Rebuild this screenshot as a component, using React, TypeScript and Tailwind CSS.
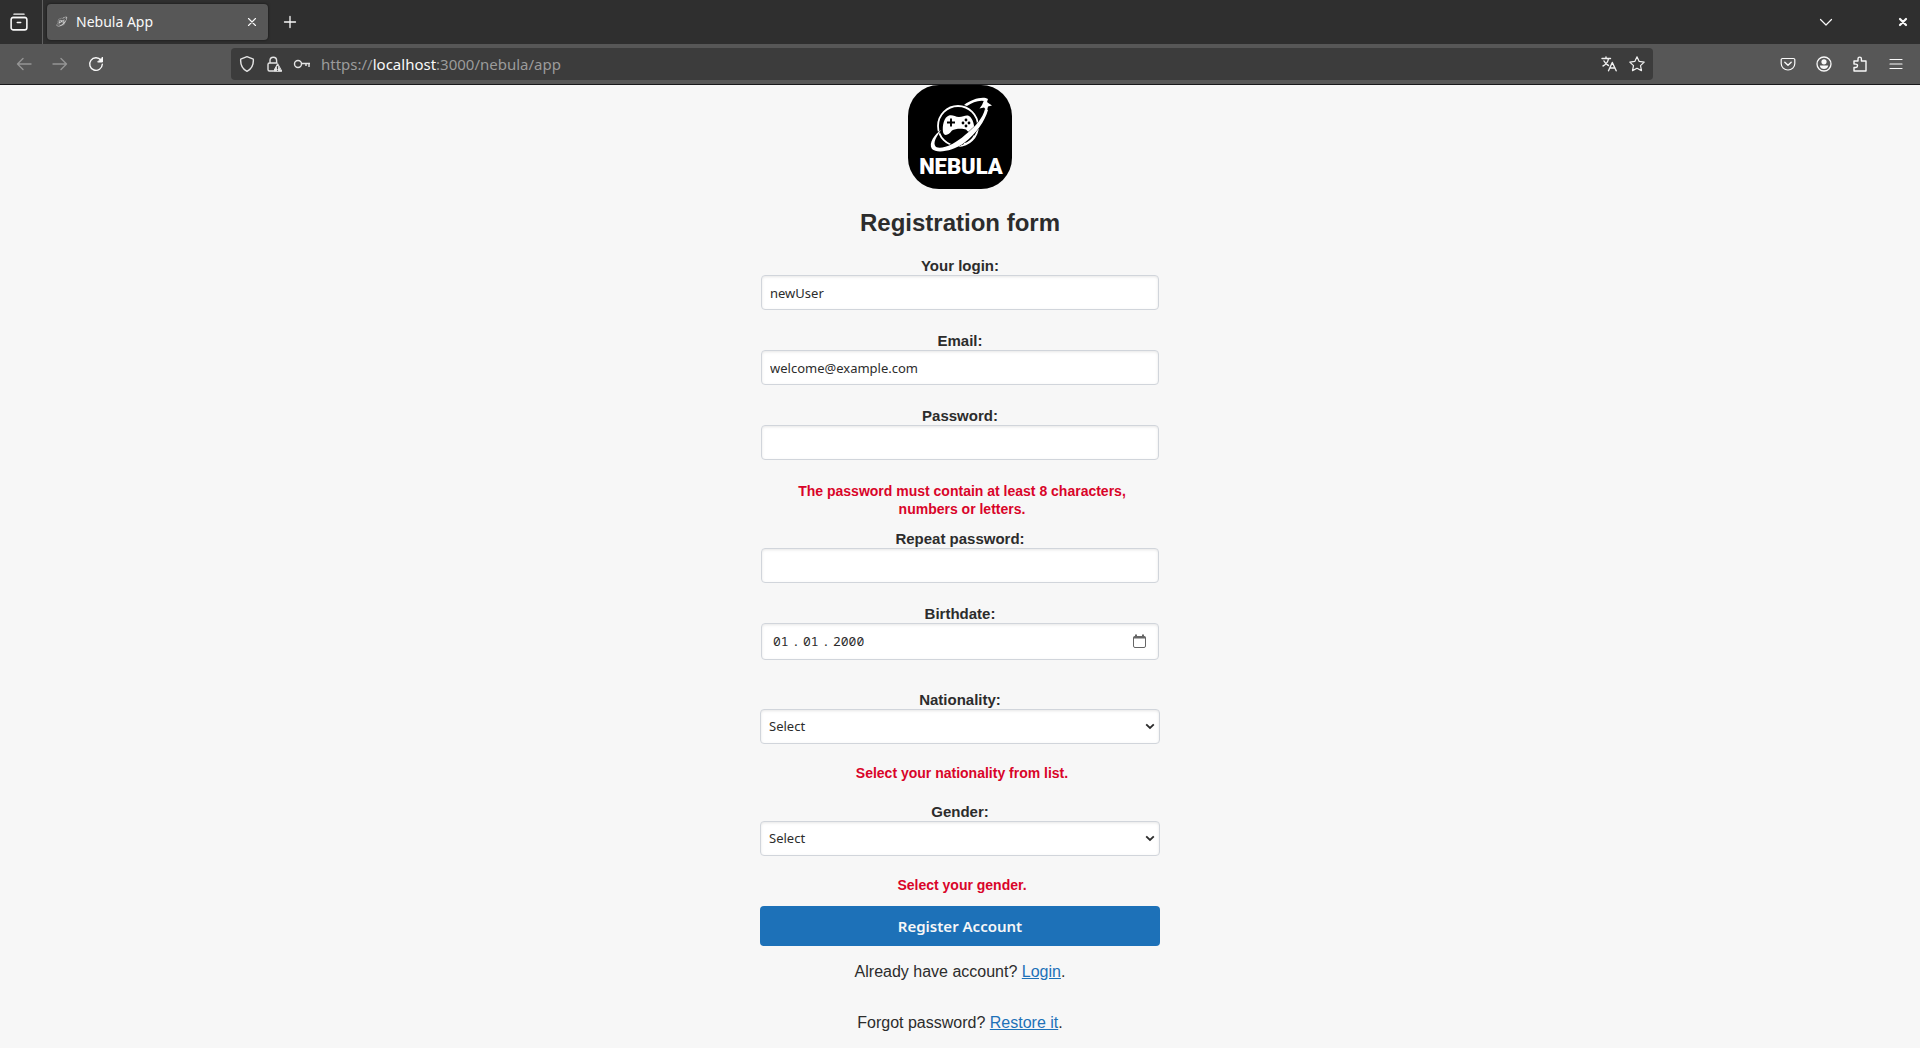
import { useState, type ReactNode } from "react";

function Glyph({ children, size = 16 }: { children: ReactNode; size?: number }) {
  return (
    <svg
      width={size}
      height={size}
      viewBox="0 0 16 16"
      fill="none"
      stroke="currentColor"
      strokeWidth={1.2}
      strokeLinecap="round"
      strokeLinejoin="round"
      aria-hidden="true"
    >
      {children}
    </svg>
  );
}

function ToolButton({ label, dim, children }: { label: string; dim?: boolean; children: ReactNode }) {
  return (
    <button
      type="button"
      aria-label={label}
      disabled={dim}
      className={
        dim
          ? "flex h-8 w-9 items-center justify-center text-[#959595]"
          : "flex h-8 w-9 items-center justify-center text-[#f9f9f9]"
      }
    >
      {children}
    </button>
  );
}

function Emblem() {
  return (
    <>
      <circle cx="50" cy="41" r="20" fill="none" stroke="#fff" strokeWidth="1.800" />
      <path
        d="M41 30.500 C45 29.500 47 32 51 32 C55 32 58 29.500 61 31 C65 33 67 42 66 46 C65 50 61 48 58 44.500 C55 43.500 47 43.500 44 45.500 C41 50 36 52 35 47 C34 41 36 32 41 30.500Z"
        fill="#fff"
      />
      <path d="M43 33.500v8M39 37.500h8" stroke="#000" strokeWidth="1.900" />
      <g fill="#000">
        <circle cx="58" cy="35" r="1.400" />
        <circle cx="58" cy="41" r="1.400" />
        <circle cx="55" cy="38" r="1.400" />
        <circle cx="61" cy="38" r="1.400" />
      </g>
      <path
        d="M56 20 C64 14 75 11 80 14 L79 17 C73 14 65 17 59 21Z"
        fill="#fff"
      />
      <path
        d="M77 24 L80 25 C77 36 68 49 56 58 C45 66 29 69 24 64 C20 58 27 49 33 45 C29 51 24 58 28 62 C34 65 47 59 57 50 C67 42 75 33 77 24Z"
        fill="#fff"
        stroke="#000"
        strokeWidth="1"
        paintOrder="stroke"
      />
      <path d="M77 13 l2.500 4.500 4.500 3 -4 1 -1 4.500 -3 -3.500 -4.500 1 2.500 -3.500z" fill="#fff" />
      <path d="M56 59 Q63 57 66.500 50.500" fill="none" stroke="#fff" strokeWidth="1.400" />
    </>
  );
}

function Logo() {
  return (
    <svg className="size-[104px]" viewBox="0 0 104 104" role="img" aria-label="Nebula">
      <rect width="104" height="104" rx="31" fill="#000" />
      <Emblem />
      <text
        x="53"
        y="89"
        textAnchor="middle"
        fill="#fff"
        fontFamily="Roboto, sans-serif"
        fontWeight="900"
        fontSize="22"
      >
        NEBULA
      </text>
    </svg>
  );
}

function Browser() {
  return (
    <header className="font-['Noto_Sans',sans-serif] text-[#f9f9f9]">
      <div className="flex h-11 items-center bg-[#2f2f2f]">
        <button type="button" aria-label="Recent windows" className="flex h-11 w-[42px] items-center justify-center pr-1">
          <Glyph size={18}>
            <path d="M3.500 1h9" />
            <path d="M2 4h12" />
            <rect x="1" y="4" width="14" height="11" rx="2" strokeWidth="1.400" />
            <path d="M6.500 8.500h3" strokeWidth="1.400" />
          </Glyph>
        </button>
        <div className="mr-1 h-full w-px bg-[#606060]" />
        <div className="flex h-9 w-[221px] items-center rounded bg-[#575757] pr-2 pl-[9px] shadow-[0_0_3px_rgba(0,0,0,0.6)]">
          <svg width="12" height="12" viewBox="20 12 66 60" aria-hidden="true" className="opacity-70">
            <Emblem />
          </svg>
          <span className="ml-2 flex-1 text-[14px] leading-5">Nebula App</span>
          <button type="button" aria-label="Close tab" className="flex size-4 items-center justify-center">
            <Glyph>
              <path d="M4.500 4.500l7 7M11.500 4.500l-7 7" strokeWidth="1.100" />
            </Glyph>
          </button>
        </div>
        <button type="button" aria-label="New tab" className="flex h-9 w-[43px] items-center justify-center">
          <Glyph>
            <path d="M8 2.500v11M2.500 8h11" strokeWidth="1.300" />
          </Glyph>
        </button>
        <div className="flex-1" />
        <button type="button" aria-label="List all tabs" className="flex h-9 w-9 items-center justify-center">
          <Glyph>
            <path d="M2.500 5.500L8 11l5.500-5.500" />
          </Glyph>
        </button>
        <button type="button" aria-label="Close window" className="mr-[9px] ml-[51px] flex size-4 items-center justify-center">
          <Glyph>
            <path d="M5 5l6 6M11 5l-6 6" strokeWidth="2.200" />
          </Glyph>
        </button>
      </div>

      <div className="flex h-[41px] items-center border-b border-[#18181a] bg-[#575757] px-1.5">
        <ToolButton label="Back" dim>
          <Glyph>
            <path d="M15 8H1.500M7 2.500L1.500 8L7 13.500" strokeWidth="1.400" />
          </Glyph>
        </ToolButton>
        <ToolButton label="Forward" dim>
          <Glyph>
            <path d="M1 8h13.500M9 2.500L14.500 8L9 13.500" strokeWidth="1.400" />
          </Glyph>
        </ToolButton>
        <ToolButton label="Reload">
          <Glyph>
            <path d="M13 4.200A6.300 6.300 0 1 0 14.300 8.300" strokeWidth="1.400" />
            <path d="M14.500 1.500v4.500H10z" fill="currentColor" strokeWidth="1" />
          </Glyph>
        </ToolButton>
        <div className="w-[117px]" />
        <div className="flex h-8 flex-1 items-center rounded bg-[#3c3c3c] px-2">
          <span className="flex items-center gap-[11px] pr-2.5 text-[#e4e4e4]">
            <Glyph>
              <path d="M8 .7L14.300 3.200C14.700 8.500 12.500 13 8 15.300C3.500 13 1.300 8.500 1.700 3.200Z" strokeWidth="1.400" />
            </Glyph>
            <Glyph>
              <path
                d="M7 15H3.500a1.500 1.500 0 0 1-1.500-1.500V8.500A1.500 1.500 0 0 1 3.500 7h7.500M4 7V4.500a3.300 3.300 0 0 1 6.600 0V7"
                strokeWidth="1.400"
              />
              <path d="M11.500 8L7.500 15.300h8z" fill="currentColor" strokeWidth="1" />
              <path d="M11.500 10.500v2M11.500 14v.2" stroke="#3c3c3c" />
            </Glyph>
            <svg width="18" height="16" viewBox="0 0 18 16" fill="none" stroke="currentColor" strokeWidth="1.400" aria-hidden="true">
              <circle cx="5" cy="8" r="3.500" />
              <path d="M8.500 7.500H17M16 7.500v3.500M13 7.500v2.500" />
            </svg>
          </span>
          <div className="flex-1 text-[15px] leading-5 text-[#9b9b9b]">
            https://<span className="text-[#f9f9f9]">localhost</span>:3000/nebula/app
          </div>
          <span className="flex items-center gap-3 text-[#f0f0f0]">
            <button type="button" aria-label="Translate page">
              <Glyph>
                <path d="M1 2.500h8.500M5 1v1.500M2 10C5 8.500 7 6 7.500 2.500M3 5C4 7 5.500 8.500 7.500 9.500" strokeWidth="1.400" />
                <path d="M7.500 14.800L11.300 6.500L15.200 14.800M9 12h5" strokeWidth="1.400" />
              </Glyph>
            </button>
            <button type="button" aria-label="Bookmark this page">
              <Glyph>
                <path d="M8 .8l2.200 4.600 5 .7-3.700 3.500 1 5L8 12.200l-4.500 2.400 1-5L.8 6.100l5-.7z" />
              </Glyph>
            </button>
          </span>
        </div>
        <div className="w-[117px]" />
        <ToolButton label="Save to Pocket">
          <Glyph>
            <path d="M2.500 2.500h11a1.300 1.300 0 0 1 1.300 1.300V7.500a6.800 6.500 0 0 1-13.600 0V3.800a1.300 1.300 0 0 1 1.300-1.300z" />
            <path d="M4.800 6.200L8 9.200l3.200-3" strokeWidth="1.400" />
          </Glyph>
        </ToolButton>
        <ToolButton label="Account">
          <Glyph>
            <circle cx="8" cy="8" r="7" strokeWidth="1.300" />
            <circle cx="8" cy="5.800" r="2.600" fill="currentColor" stroke="none" />
            <path d="M3.800 9.500h8.400C12 12 10 13 8 13S4 12 3.800 9.500z" fill="currentColor" stroke="none" />
          </Glyph>
        </ToolButton>
        <ToolButton label="Extensions">
          <Glyph>
            <path d="M2 5h4V2.800a1.700 1.700 0 0 1 3.400 0V5H14v10H2v-3.500h1.800a1.700 1.700 0 0 0 0-3.400H2z" strokeWidth="1.400" />
          </Glyph>
        </ToolButton>
        <ToolButton label="Menu">
          <Glyph>
            <path d="M2 3.500h12M2 8h12M2 12.500h12" />
          </Glyph>
        </ToolButton>
      </div>
    </header>
  );
}

const field =
  "h-[35px] w-full rounded border border-[#d1d5db] bg-white px-2 font-['Noto_Sans',sans-serif] text-[13px] text-[#2c2c2c] shadow-[inset_0_1px_3px_rgba(0,0,0,0.1)]";

function Label({ htmlFor, children }: { htmlFor: string; children: ReactNode }) {
  return (
    <label htmlFor={htmlFor} className="block text-[15px] leading-[18px] font-bold">
      {children}
    </label>
  );
}

function TextField({ id, label, type, initial = "" }: { id: string; label: string; type: string; initial?: string }) {
  const [value, setValue] = useState(initial);
  return (
    <div className="px-px">
      <Label htmlFor={id}>{label}</Label>
      <input id={id} type={type} value={value} onChange={(e) => setValue(e.target.value)} className={field} />
    </div>
  );
}

function SelectField({ id, label, options }: { id: string; label: string; options: string[] }) {
  return (
    <div>
      <Label htmlFor={id}>{label}</Label>
      <div className="relative">
        <select id={id} className={`${field} appearance-none`}>
          <option>Select</option>
          {options.map((o) => (
            <option key={o}>{o}</option>
          ))}
        </select>
        <svg
          className="pointer-events-none absolute top-3 right-[5px]"
          width="10"
          height="10"
          viewBox="0 0 10 10"
          fill="none"
          stroke="#2c2c2c"
          strokeWidth="1.800"
          aria-hidden="true"
        >
          <path d="M1.200 3.300L5 7l3.800-3.700" />
        </svg>
      </div>
    </div>
  );
}

function DateField() {
  const part = "w-4 bg-transparent p-0";
  return (
    <div className="px-px">
      <Label htmlFor="birth-day">Birthdate:</Label>
      <div className="flex h-[37px] items-center rounded border border-[#d1d5db] bg-white pr-3 pl-[11px] font-['Noto_Sans_Mono','DejaVu_Sans_Mono',monospace] text-[13px] text-[#2c2c2c] shadow-[inset_0_1px_3px_rgba(0,0,0,0.1)]">
        <input id="birth-day" aria-label="Day" defaultValue="01" className={part} />
        <span className="w-3.5 text-center">.</span>
        <input aria-label="Month" defaultValue="01" className={part} />
        <span className="w-3.5 text-center">.</span>
        <input aria-label="Year" defaultValue="2000" className="w-9 bg-transparent p-0" />
        <button type="button" aria-label="Open calendar" className="mb-0.5 ml-auto">
          <svg width="13" height="14" viewBox="0 0 13 14" fill="none" stroke="#666" aria-hidden="true">
            <rect x=".5" y="2.500" width="12" height="11" rx="1.500" />
            <path d="M.5 3.500h12M3 .5v3M10 .5v3" strokeWidth="2" />
          </svg>
        </button>
      </div>
    </div>
  );
}

function Problem({ children }: { children: ReactNode }) {
  return (
    <p role="alert" className="pr-5 pl-6 text-[14px] leading-[18px] font-bold text-[#d90429]">
      {children}
    </p>
  );
}

const link = "text-[#1d71b8] underline";

export default function App() {
  return (
    <div className="flex min-h-screen flex-col bg-[#f7f7f7]">
      <Browser />
      <main className="mx-auto w-full max-w-[400px] text-center font-['Liberation_Sans',sans-serif] text-[#2c2c2c]">
        <div className="flex justify-center">
          <Logo />
        </div>
        <h1 className="my-5 text-2xl leading-7 font-bold">Registration form</h1>
        <form onSubmit={(e) => e.preventDefault()}>
          <div className="flex flex-col gap-[22px]">
            <TextField id="login" label="Your login:" type="text" initial="newUser" />
            <TextField id="email" label="Email:" type="email" initial="welcome@example.com" />
            <TextField id="password" label="Password:" type="password" />
            <Problem>The password must contain at least 8 characters, numbers or letters.</Problem>
          </div>
          <div className="mt-3 flex flex-col gap-[22px]">
            <TextField id="repeat" label="Repeat password:" type="password" />
            <DateField />
          </div>
          <div className="mt-[31px] flex flex-col gap-5">
            <SelectField id="nationality" label="Nationality:" options={["American", "British", "Polish"]} />
            <Problem>Select your nationality from list.</Problem>
          </div>
          <div className="mt-[21px] flex flex-col gap-5">
            <SelectField id="gender" label="Gender:" options={["Female", "Male", "Other"]} />
            <Problem>Select your gender.</Problem>
          </div>
          <button
            type="submit"
            className="mt-3 h-10 w-full rounded bg-[#1d71b8] font-['Noto_Sans',sans-serif] text-[15px] font-semibold text-[#f7f7f7]"
          >
            Register Account
          </button>
        </form>
        <p className="mt-[17px] text-base leading-[18px]">
          Already have account? <a href="#login" className={link}>Login</a>.
        </p>
        <p className="mt-[33px] text-base leading-[18px]">
          Forgot password? <a href="#restore" className={link}>Restore it</a>.
        </p>
      </main>
    </div>
  );
}
